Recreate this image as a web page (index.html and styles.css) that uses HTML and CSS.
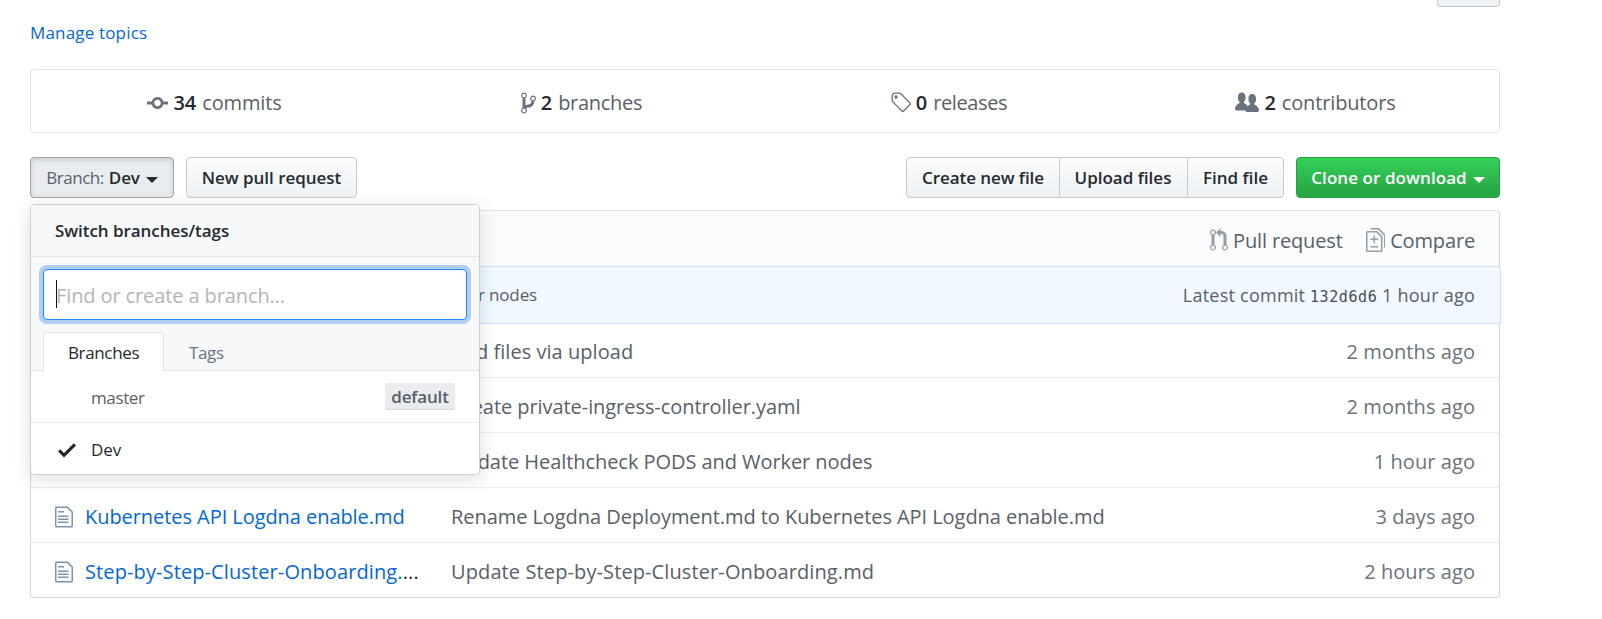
FILE: index.html
```
<!DOCTYPE html>
<html lang="en">
<head>
<meta charset="utf-8">
<title>Repository</title>
<link rel="stylesheet" href="styles.css">
</head>
<body>
<svg class="defs" aria-hidden="true">
  <symbol id="commit" viewBox="0 0 14 16"><path fill-rule="evenodd" d="M10.86 7c-.45-1.72-2-3-3.86-3-1.86 0-3.41 1.28-3.86 3H0v2h3.14c.45 1.72 2 3 3.86 3 1.86 0 3.41-1.28 3.86-3H14V7h-3.14zM7 10.2c-1.22 0-2.2-.98-2.2-2.2 0-1.22.98-2.2 2.2-2.2 1.22 0 2.2.98 2.2 2.2 0 1.22-.98 2.2-2.2 2.2z"/></symbol>
  <symbol id="branch" viewBox="0 0 10 16"><path fill-rule="evenodd" d="M10 5c0-1.11-.89-2-2-2a1.993 1.993 0 0 0-1 3.72v.3c-.02.52-.23.98-.63 1.38-.4.4-.86.61-1.38.63-.83.02-1.48.16-2 .45V4.72a1.993 1.993 0 0 0-1-3.72C.88 1 0 1.89 0 3a2 2 0 0 0 1 1.72v6.56c-.59.35-1 .99-1 1.72 0 1.11.89 2 2 2 1.11 0 2-.89 2-2 0-.53-.2-1-.53-1.36.09-.06.48-.41.59-.47.25-.11.56-.17.94-.17 1.05-.05 1.95-.45 2.75-1.25S8.95 7.77 9 6.73h-.02C9.59 6.37 10 5.73 10 5zM2 1.8c.66 0 1.2.55 1.2 1.2 0 .65-.55 1.2-1.2 1.2C1.35 4.2.8 3.65.8 3c0-.65.55-1.2 1.2-1.2zm0 12.41c-.66 0-1.2-.55-1.2-1.2 0-.65.55-1.2 1.2-1.2.65 0 1.2.55 1.2 1.2 0 .65-.55 1.2-1.2 1.2zm6-8c-.66 0-1.2-.55-1.2-1.2 0-.65.55-1.2 1.2-1.2.65 0 1.2.55 1.2 1.2 0 .65-.55 1.2-1.2 1.2z"/></symbol>
  <symbol id="tag" viewBox="0 0 14 16"><path fill-rule="evenodd" d="M7.73 1.73C7.26 1.26 6.62 1 5.96 1H3.5C2.13 1 1 2.13 1 3.5v2.47c0 .66.27 1.3.73 1.77l6.06 6.06c.39.39 1.02.39 1.41 0l4.59-4.59a.996.996 0 0 0 0-1.41L7.73 1.73zM2.38 7.09c-.31-.3-.47-.7-.47-1.13V3.5c0-.88.72-1.59 1.59-1.59h2.47c.42 0 .83.16 1.13.47l6.14 6.13-4.73 4.73-6.13-6.15zM3.01 3h2v2H3V3h.01z"/></symbol>
  <symbol id="people" viewBox="0 0 16 16"><path fill-rule="evenodd" d="M16 12.999c0 .439-.45 1-1 1H7.995c-.539 0-.994-.447-.995-.999H1c-.54 0-1-.561-1-1 0-2.634 3-4 3-4s.229-.409 0-1c-.841-.621-1.058-.59-1-3 .058-2.419 1.367-3 2.5-3s2.442.58 2.5 3c.058 2.41-.159 2.379-1 3-.229.59 0 1 0 1s1.549.711 2.42 2.088C9.196 9.369 10 8.999 10 8.999s.229-.409 0-1c-.841-.62-1.058-.59-1-3 .058-2.419 1.367-3 2.5-3s2.437.581 2.495 3c.059 2.41-.158 2.38-1 3-.229.59 0 1 0 1s3.005 1.366 3.005 4z"/></symbol>
  <symbol id="pull" viewBox="0 0 12 16"><path fill-rule="evenodd" d="M11 11.28V5c-.03-.78-.34-1.47-.94-2.06C9.46 2.35 8.78 2.03 8 2H7V0L4 3l3 3V4h1c.27.02.48.11.69.31.21.2.3.42.31.69v6.28A1.993 1.993 0 0 0 10 15a1.993 1.993 0 0 0 1-3.72zm-1 2.92c-.66 0-1.2-.55-1.2-1.2 0-.65.55-1.2 1.2-1.2.65 0 1.2.55 1.2 1.2 0 .65-.55 1.2-1.2 1.2zM4 3c0-1.11-.89-2-2-2a1.993 1.993 0 0 0-1 3.72v6.56A1.993 1.993 0 0 0 2 15a1.993 1.993 0 0 0 1-3.72V4.72c.59-.34 1-.98 1-1.72zm-.8 10c0 .66-.55 1.2-1.2 1.2-.65 0-1.2-.55-1.2-1.2 0-.65.55-1.2 1.2-1.2.65 0 1.2.55 1.2 1.2zM2 4.2C1.34 4.2.8 3.65.8 3c0-.65.55-1.2 1.2-1.2.65 0 1.2.55 1.2 1.2 0 .65-.55 1.2-1.2 1.2z"/></symbol>
  <symbol id="diff" viewBox="0 0 13 16"><path fill-rule="evenodd" d="M6 7h2v1H6v2H5V8H3V7h2V5h1v2zm-3 6h5v-1H3v1zM7.5 2L11 5.5V15c0 .55-.45 1-1 1H1c-.55 0-1-.45-1-1V3c0-.55.45-1 1-1h6.5zM10 6L7 3H1v12h9V6zM8.5 0H3v1h5l4 4v8h1V4.5L8.5 0z"/></symbol>
  <symbol id="file" viewBox="0 0 12 16"><path fill-rule="evenodd" d="M6 5H2V4h4v1zM2 8h7V7H2v1zm0 2h7V9H2v1zm0 2h7v-1H2v1zm10-7.5V14c0 .55-.45 1-1 1H1c-.55 0-1-.45-1-1V2c0-.55.45-1 1-1h7.5L12 4.5zM11 5L8 2H1v12h10V5z"/></symbol>
  <symbol id="check" viewBox="0 0 12 16"><path fill-rule="evenodd" d="M12 5l-8 8-4-4 1.5-1.5L4 10l6.5-6.5L12 5z"/></symbol>
</svg>

<main class="container">
  <div class="edit-bar"><span class="btn edit"></span></div>
  <div class="topics"><a class="link">Manage topics</a></div>

  <ul class="stats">
    <li><svg class="i14"><use href="#commit"/></svg><b>34</b><span class="k2">commits</span></li>
    <li><svg class="i10"><use href="#branch"/></svg><b>2</b><span class="k3">branches</span></li>
    <li><svg class="i14"><use href="#tag"/></svg><b>0</b><span class="k4">releases</span></li>
    <li><svg class="i16"><use href="#people"/></svg><b>2</b><span class="k2">contributors</span></li>
  </ul>

  <div class="actions">
    <div class="branch-select">
      <button class="btn selected"><span class="lbl">Branch:</span><span>Dev</span><i class="caret"></i></button>
      <section class="popup">
        <h2 class="popup-title">Switch branches/tags</h2>
        <div class="filters">
          <div class="field"><i class="cursor"></i><span class="placeholder">Find or create a branch…</span></div>
          <div class="tabs"><span class="tab on">Branches</span><span class="tab">Tags</span></div>
        </div>
        <div class="option"><span class="mark"></span><span class="k4 name">master</span><span class="badge">default</span></div>
        <div class="option current"><span class="mark"><svg class="i12"><use href="#check"/></svg></span><span class="k1 name">Dev</span></div>
      </section>
    </div>
    <button class="btn new-pr">New pull request</button>
    <div class="group">
      <button class="btn create">Create new file</button>
      <button class="btn upload">Upload files</button>
      <button class="btn find">Find file</button>
    </div>
    <button class="btn primary">Clone or download<i class="caret"></i></button>
  </div>

  <section class="files">
    <header class="files-head">
      <a class="tool pr"><svg class="i12"><use href="#pull"/></svg><span class="k2">Pull request</span></a>
      <a class="tool"><svg class="i13"><use href="#diff"/></svg><span class="k2">Compare</span></a>
    </header>
    <div class="commit">
      <span class="message">Worker nodes</span>
      <span class="latest"><span class="when">Latest commit</span> <code>132d6d6</code> <span class="when">1 hour ago</span></span>
    </div>
    <div class="row"><span class="fname"></span><span class="msg w0">Add files via upload</span><span class="age">2 months ago</span></div>
    <div class="row"><span class="fname"></span><span class="msg k05">Create private-ingress-controller.yaml</span><span class="age">2 months ago</span></div>
    <div class="row"><span class="fname"></span><span class="msg k05">Update Healthcheck PODS and Worker nodes</span><span class="age">1 hour ago</span></div>
    <div class="row"><span class="fname"><svg class="i12"><use href="#file"/></svg><a class="link k05">Kubernetes API Logdna enable.md</a></span><span class="msg k05">Rename Logdna Deployment.md to Kubernetes API Logdna enable.md</span><span class="age">3 days ago</span></div>
    <div class="row"><span class="fname"><svg class="i12"><use href="#file"/></svg><span class="w1"><a class="link">Step-by-Step-Cluster-Onboarding.</a>...</span></span><span class="msg w1">Update Step-by-Step-Cluster-Onboarding.md</span><span class="age">2 hours ago</span></div>
  </section>
</main>
</body>
</html>
```
FILE: styles.css
```
* { box-sizing: border-box; }
body { margin: 0; background: #fff; color: #24292e; font: 17px/26px "Open Sans", "Noto Sans", sans-serif; overflow: hidden; }
.defs { display: none; }
svg { fill: currentColor; height: 24px; flex: none; }
.i10 { width: 15px; } .i12 { width: 18px; } .i13 { width: 19.5px; } .i14 { width: 21px; } .i16 { width: 24px; }
.k05 { letter-spacing: -.06px; } .k1 { letter-spacing: -.11px; } .k2 { letter-spacing: -.15px; }
.k3 { letter-spacing: -.28px; } .k4 { letter-spacing: -.38px; } .w0 { letter-spacing: .04px; } .w1 { letter-spacing: .11px; }
.link { color: #0366d6; }
.container { width: 1470px; margin-left: 30px; }

.edit-bar { height: 7px; display: flex; justify-content: flex-end; }
.edit-bar .edit { width: 63px; height: 7px; border-top: 0; border-radius: 0 0 4px 4px; background: #eff3f6; }
.topics { height: 62px; padding-top: 13px; letter-spacing: .17px; }

.stats { display: grid; grid-template-columns: repeat(4, 1fr); height: 64px; margin: 0 0 24px; padding: 4px 0 0; list-style: none; border: 1px solid #dfe2e5; border-radius: 4px; font-size: 20px; color: #586069; }
.stats li { display: flex; align-items: center; justify-content: center; }
.stats svg { color: #6a737d; margin: 0 5px 0 0; }
.stats b { font-weight: 600; color: #24292e; margin-right: 6px; }

.actions { display: flex; height: 41px; margin-bottom: 12px; }
.btn { display: flex; align-items: center; justify-content: center; height: 41px; padding: 0; border: 1px solid #c6cacd; border-radius: 4px; background: linear-gradient(#fafbfc, #eff3f6 90%); color: #24292e; font: 600 17px/26px "Open Sans", "Noto Sans", sans-serif; white-space: nowrap; }
.caret { width: 0; height: 0; border: 6px solid transparent; border-top-color: currentColor; border-bottom: 0; margin: 4px 0 0 6px; }
.branch-select { position: relative; width: 144px; margin-right: 12px; }
.selected { width: 144px; background: #e9ecef; border-color: #a0a4a8; box-shadow: inset 0 2px 5px rgba(27,31,35,.15); letter-spacing: -.1px; }
.selected .lbl { font-weight: 400; color: #586069; letter-spacing: -.45px; margin-right: 5px; }
.new-pr { width: 171px; letter-spacing: -.03px; }
.group { display: flex; margin-left: auto; margin-right: 12px; }
.create { width: 154px; border-radius: 4px 0 0 4px; letter-spacing: -.07px; }
.upload { width: 129px; border-radius: 0; margin-left: -1px; padding-right: 1px; }
.find { width: 97px; border-radius: 0 4px 4px 0; margin-left: -1px; }
.primary { width: 204px; color: #fff; border-color: #279f43; background: linear-gradient(#34d058, #28a745 90%); letter-spacing: .08px; }

.popup { position: absolute; z-index: 2; top: 47px; left: 0; width: 450px; height: 271px; border: 1px solid #cdd1d5; border-radius: 4px; background: #fff; box-shadow: 0 4px 18px rgba(27,31,35,.15); }
.popup-title { height: 52px; margin: 0; padding: 13px 24px 0; font-size: 17px; font-weight: 600; line-height: 26px; letter-spacing: -.05px; background: #f6f8fa; border-bottom: 1px solid #e1e4e8; border-radius: 3px 3px 0 0; }
.filters { height: 114px; padding: 12px 12px 0; background: #f6f8fa; border-bottom: 1px solid #e1e4e8; }
.field { display: flex; align-items: center; height: 51px; padding: 0 12px; border: 1px solid #2188ff; border-radius: 4px; background: #fff; color: #b1b5b9; font-size: 20px; box-shadow: inset 0 1px 3px rgba(27,31,35,.075), 0 0 0 4px #b0cef1; }
.field .cursor { width: 1px; height: 28px; background: #111; margin-top: -1px; }
.placeholder { padding-top: 2px; margin-left: -1px; letter-spacing: -.11px; }
.tabs { display: flex; margin-top: 12px; }
.tab { height: 38px; padding: 7px 24px 0; border: 1px solid transparent; color: #6a737d; letter-spacing: -.36px; }
.tab.on { width: 121px; height: 40px; margin-bottom: -1px; color: #24292e; background: #fff; border-color: #e1e4e8; border-bottom: 0; border-radius: 4px 4px 0 0; }
.option { display: flex; align-items: center; height: 52px; padding: 0 24px 1px 27px; color: #586069; border-bottom: 1px solid #eaecef; }
.option .mark { display: flex; width: 33px; padding-top: 2px; }
.option .name { padding-top: 3px; }
.option.current { height: 51px; padding-bottom: 0; color: #24292e; border-bottom: 0; }
.option.current .name { padding-top: 2px; }
.badge { margin-left: auto; width: 70px; height: 27px; padding-top: 1px; text-align: center; font-weight: 600; letter-spacing: -.16px; background: #eaecef; border-radius: 3px; box-shadow: inset 0 -1px 0 #d3d6da; }

.files { height: 388px; border: 1px solid #d1d5da; border-top-color: #dfe2e5; border-radius: 4px; font-size: 20px; color: #586069; }
.files-head { display: flex; align-items: center; justify-content: flex-end; height: 55px; padding: 5px 24px 0 0; background: #fafbfc; border-radius: 4px 4px 0 0; }
.tool { display: flex; align-items: center; }
.tool svg { color: #959da5; margin: -3px 5px 0 0; }
.tool.pr { margin-right: 23px; }
.commit { display: flex; align-items: center; justify-content: space-between; height: 58px; margin: 0 -2px 0 -1px; padding-right: 25px; background: #f1f8ff; border: 1px solid #c8e1ff; border-radius: 4px 4px 0 0; font-size: 18px; }
.message { width: 506px; text-align: right; font-size: 17px; letter-spacing: -.14px; }
.latest { white-space: pre; padding-top: 2px; }
.when { letter-spacing: .24px; }
.latest code { font: 15px/26px "DejaVu Sans Mono", monospace; letter-spacing: .6px; color: #444d56; }
.row { display: flex; align-items: center; height: 55px; padding: 3px 24px 0; border-top: 1px solid #eaecef; white-space: nowrap; }
.commit + .row { height: 53px; border-top: 0; }
.fname { display: flex; align-items: center; width: 396px; color: #24292e; }
.fname svg { color: #7d94ae; margin-right: 12px; }
.age { margin-left: auto; color: #6a737d; letter-spacing: .07px; }
```
